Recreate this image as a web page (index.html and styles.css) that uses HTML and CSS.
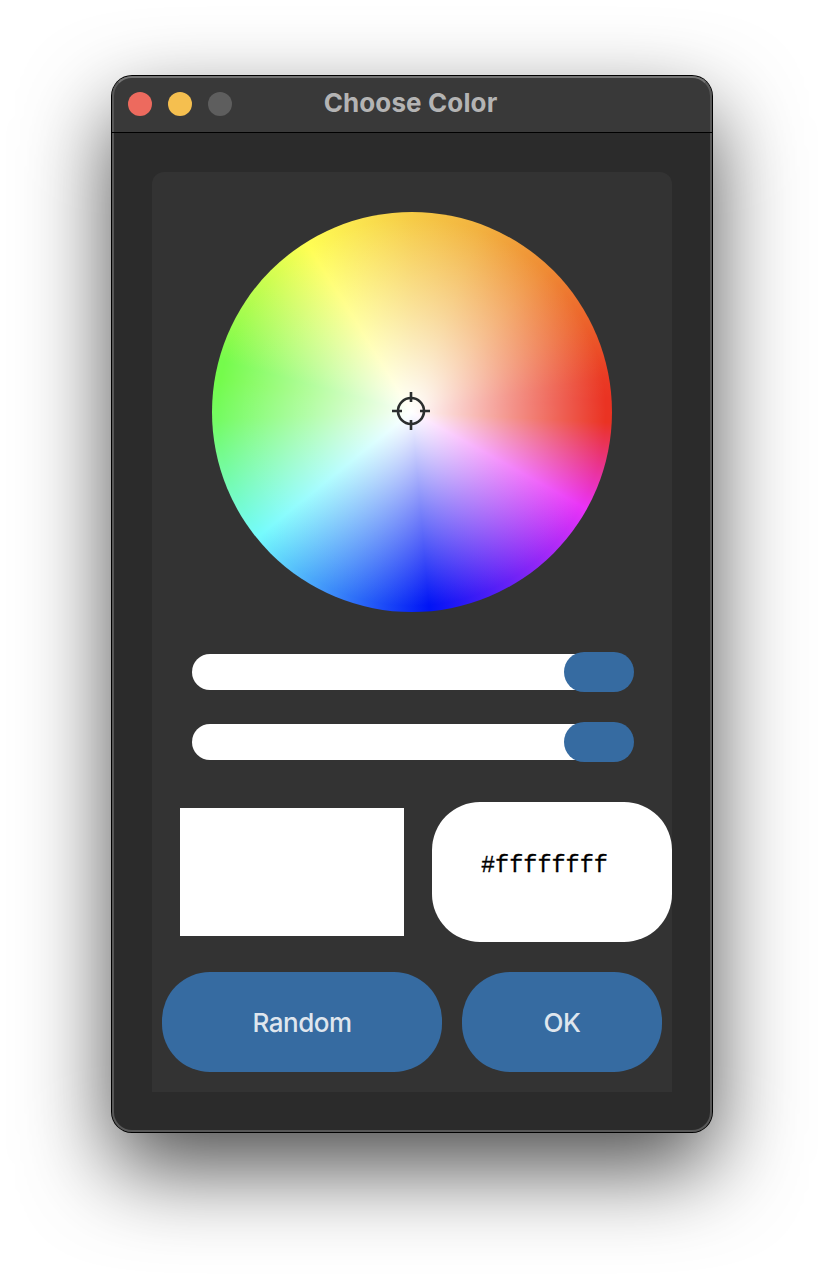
FILE: index.html
```html
<!DOCTYPE html>
<html lang="en">
<head>
<meta charset="utf-8">
<title>Choose Color</title>
<link rel="stylesheet" href="styles.css">
</head>
<body>
<main class="window">
  <header class="titlebar">
    <div class="lights">
      <span class="light close"></span>
      <span class="light minimize"></span>
      <span class="light disabled"></span>
    </div>
    <h1 class="title">Choose Color</h1>
  </header>
  <section class="panel">
    <div class="wheel">
      <svg class="target" viewBox="0 0 40 40" width="40" height="40" fill="none" stroke="#2b2e2e" stroke-width="2.6">
        <circle cx="20" cy="20" r="13"/>
        <path d="M20 1v10M20 29v10M1 20h10M29 20h10"/>
      </svg>
    </div>
    <div class="slider"><span class="thumb"></span></div>
    <div class="slider"><span class="thumb"></span></div>
    <div class="values">
      <div class="swatch"></div>
      <div class="hex"><span class="hex-text">#ffffffff</span></div>
    </div>
    <div class="actions">
      <button class="button random">Random</button>
      <button class="button ok">OK</button>
    </div>
  </section>
</main>
</body>
</html>
```
FILE: styles.css
```css
* { box-sizing: border-box; }
body {
  margin: 0;
  height: 1280px;
  padding: 76px 112px 0;
  overflow: hidden;
  background: #fff;
  font-family: Inter, "Liberation Sans", sans-serif;
}
.window {
  position: relative;
  width: 600px;
  height: 1056px;
  border-radius: 20px;
  background: #2b2b2b;
  box-shadow: 0 0 0 1px #000, 0 36px 88px rgba(0, 0, 0, .7);
}
/* Light bevel along the window edge */
.window::after {
  content: "";
  position: absolute;
  inset: 0;
  border: 2px solid #585858;
  border-top-color: #747474;
  border-radius: 20px;
  pointer-events: none;
}
.titlebar {
  display: grid;
  grid-template-columns: 1fr auto 1fr;
  height: 57px;
  padding: 0 16px;
  border-bottom: 1px solid #000;
  border-radius: 20px 20px 0 0;
  background: #393939;
}
/* Separator line, carried across the bevel */
.titlebar::after {
  content: "";
  position: absolute;
  z-index: 1;
  top: 56px;
  left: 0;
  right: 0;
  height: 1px;
  background: #000;
}
.lights { display: flex; gap: 16px; padding-top: 16px; }
.light { width: 24px; height: 24px; border-radius: 50%; }
.close { background: #ed6a5e; }
.minimize { background: #f5bf4f; }
.disabled { background: #5e5e5e; }
.title {
  margin: 0 3px 0 0;
  padding-top: 11px;
  font-size: 26px;
  line-height: 32px;
  font-weight: 700;
  letter-spacing: .12px;
  color: #b4b4b4;
}
.panel {
  width: 520px;
  height: 920px;
  margin: 39px 40px 0;
  padding-top: 40px;
  border-radius: 12px 12px 0 0;
  background: #333;
}
.wheel {
  display: grid;
  place-items: center;
  width: 400px;
  height: 400px;
  margin: 0 60px 42px;
  padding: 0 2px 2px 0;
  border-radius: 50%;
  background:
    radial-gradient(circle closest-side, #fff 0, rgba(255, 255, 255, .47) 50%, rgba(255, 255, 255, 0) 97%),
    conic-gradient(#f6cb46 0deg, #f2b240 20deg, #ef8c35 43deg, #ec622b 63deg, #ea3a24 80deg, #ea3323 86deg, #ea3323 93deg, #ea33f7 119deg, #0014f5 175deg, #75fbfd 231deg, #75fb62 268deg, #75fb4c 280deg, #75fb4c 285deg, #fffe54 328deg, #fbe750 342deg, #f6cb46 360deg);
}
.slider {
  display: flex;
  align-items: center;
  justify-content: flex-end;
  width: 442px;
  height: 36px;
  margin: 0 0 34px 40px;
  border-radius: 18px;
  background: linear-gradient(90deg, #fff 410px, transparent 410px);
}
.thumb {
  flex: none;
  width: 70px;
  height: 40px;
  border-radius: 20px;
  background: #366ba1;
}
.values {
  display: flex;
  align-items: center;
  justify-content: space-between;
  height: 140px;
  margin-top: 42px;
  padding-left: 28px;
}
.swatch { width: 224px; height: 128px; background: #fff; }
.hex {
  width: 240px;
  height: 140px;
  padding: 49px 0 0 49px;
  border-radius: 48px;
  background: #fff;
}
.hex-text {
  display: block;
  font: 23.5px/30px "Liberation Mono", monospace;
  -webkit-text-stroke: .3px #000;
  color: #000;
}
.actions {
  display: flex;
  justify-content: space-between;
  padding: 30px 10px 0;
}
.button {
  height: 100px;
  padding: 2px 0 0;
  border: 0;
  border-radius: 48px;
  background: #366ba1;
  color: #dfe6ee;
  font: 500 26px/32px Inter, "Liberation Sans", sans-serif;
  letter-spacing: -.5px;
}
.random { width: 280px; }
.ok { width: 200px; }
```
